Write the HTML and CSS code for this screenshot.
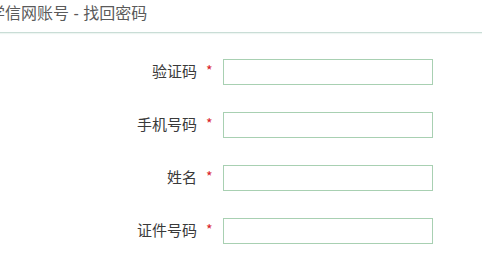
FILE: index.html
```html
<!DOCTYPE html>
<html lang="zh-CN">
<head>
<meta charset="utf-8">
<title>学信网账号 - 找回密码</title>
<link rel="stylesheet" href="styles.css">
</head>
<body>
<div class="header">
  <h1 class="title">学信网账号 - 找回密码</h1>
</div>
<form class="form">
  <div class="row">
    <label class="label">验证码</label>
    <span class="req">*</span>
    <input class="field" type="text">
  </div>
  <div class="row">
    <label class="label">手机号码</label>
    <span class="req">*</span>
    <input class="field" type="text">
  </div>
  <div class="row">
    <label class="label">姓名</label>
    <span class="req">*</span>
    <input class="field" type="text">
  </div>
  <div class="row">
    <label class="label">证件号码</label>
    <span class="req">*</span>
    <input class="field" type="text">
  </div>
</form>
</body>
</html>
```
FILE: styles.css
```css
html, body {
  margin: 0;
  padding: 0;
  background: #fff;
  overflow: hidden;
}
body {
  font-family: "Noto Sans CJK SC", "Noto Sans", sans-serif;
  color: #333;
}
.header {
  height: 32px;
  border-bottom: 1px solid #c9ddd6;
  box-shadow: 0 1px 1px #eef5f2;
}
.title {
  margin: 0;
  font-family: "Liberation Sans", "Noto Sans CJK SC", sans-serif;
  font-size: 16px;
  font-weight: normal;
  line-height: 28px;
  color: #5a5a5a;
  text-indent: -11px;
  white-space: nowrap;
}
.form {
  display: flex;
  flex-direction: column;
  gap: 27px;
  padding-top: 26px;
}
.row {
  display: grid;
  grid-template-columns: 197px 26px 210px;
  align-items: center;
  height: 26px;
}
.label {
  text-align: right;
  font-size: 15px;
  line-height: 20px;
  color: #3a3a3a;
  margin-top: -2px;
}
.req {
  color: #d9222a;
  font-size: 14px;
  line-height: 14px;
  padding-left: 9px;
  margin-top: -4px;
}
.field {
  box-sizing: border-box;
  width: 210px;
  height: 26px;
  margin: 0;
  border: 1px solid #a8d0b2;
  background: #fff;
  padding: 0 6px;
  outline: none;
}
```
